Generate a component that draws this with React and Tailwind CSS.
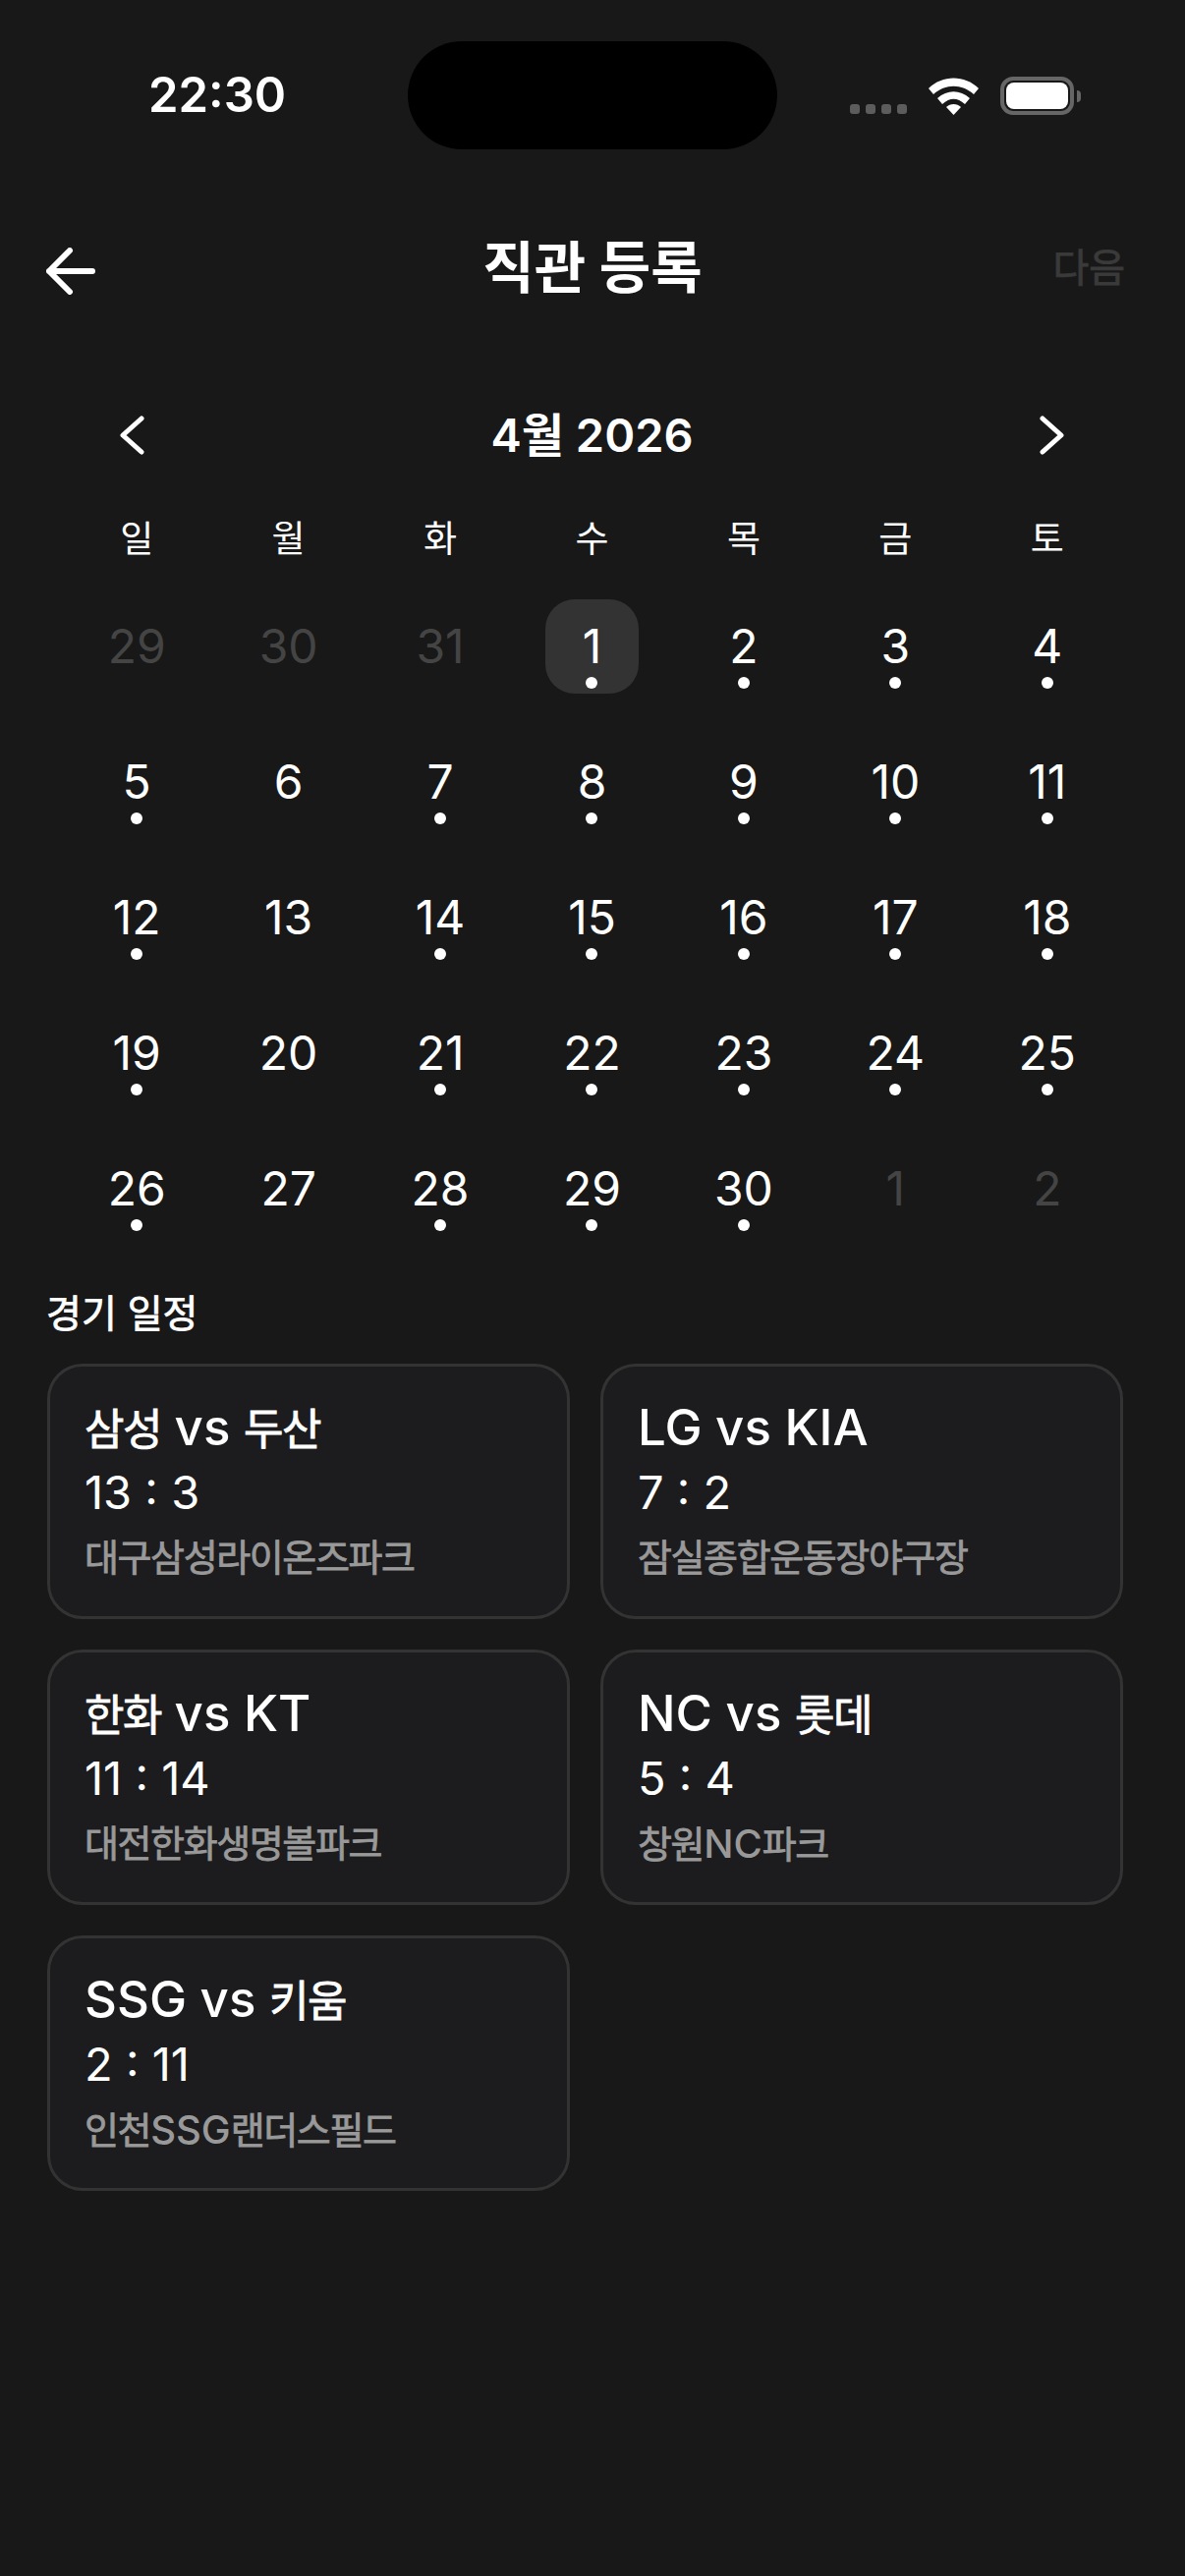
const FONT = "font-['Inter','Noto_Sans_CJK_KR',sans-serif]";

const weekdays = ["일", "월", "화", "수", "목", "금", "토"];

const days = [
  { n: 29, muted: true }, { n: 30, muted: true }, { n: 31, muted: true },
  { n: 1, dot: true, selected: true }, { n: 2, dot: true }, { n: 3, dot: true }, { n: 4, dot: true },
  { n: 5, dot: true }, { n: 6 }, { n: 7, dot: true }, { n: 8, dot: true }, { n: 9, dot: true }, { n: 10, dot: true }, { n: 11, dot: true },
  { n: 12, dot: true }, { n: 13 }, { n: 14, dot: true }, { n: 15, dot: true }, { n: 16, dot: true }, { n: 17, dot: true }, { n: 18, dot: true },
  { n: 19, dot: true }, { n: 20 }, { n: 21, dot: true }, { n: 22, dot: true }, { n: 23, dot: true }, { n: 24, dot: true }, { n: 25, dot: true },
  { n: 26, dot: true }, { n: 27 }, { n: 28, dot: true }, { n: 29, dot: true }, { n: 30, dot: true }, { n: 1, muted: true }, { n: 2, muted: true },
];

const games = [
  { title: "삼성 vs 두산", score: "13 : 3", venue: "대구삼성라이온즈파크" },
  { title: "LG vs KIA", score: "7 : 2", venue: "잠실종합운동장야구장" },
  { title: "한화 vs KT", score: "11 : 14", venue: "대전한화생명볼파크" },
  { title: "NC vs 롯데", score: "5 : 4", venue: "창원NC파크" },
  { title: "SSG vs 키움", score: "2 : 11", venue: "인천SSG랜더스필드" },
];

// hangul runs are set smaller than latin ones in the cards
function Mixed({ text, hangul, latin }) {
  return text.split(/([가-힣]+)/).filter(Boolean).map((part, i) => (
    <span key={i} className={/[가-힣]/.test(part) ? hangul : latin}>{part}</span>
  ));
}

function StatusIcons() {
  return (
    <div className="flex h-[39px] items-center">
      <div className="mr-[22px] flex gap-[6px] self-end pb-[1px]">
        {[0, 1, 2, 3].map((i) => (
          <span key={i} className="h-[10px] w-[10px] rounded-[3px] bg-[#5c5c5c]" />
        ))}
      </div>
      <svg width="51" height="38" viewBox="0 0 51 38" className="mr-[22px]">
        <path d="M0 11 C14 -3 37 -3 51 11 L46 17 C34 6 17 6 5 17 Z" fill="#fff" />
        <path d="M9 21 C19 12 32 12 42 21 L37 27 C29 20 22 20 14 27 Z" fill="#fff" />
        <path d="M18 30 C22 26 29 26 33 30 L25.5 38 Z" fill="#fff" />
      </svg>
      <div className="h-[39px] w-[75px] rounded-[13px] border-[4px] border-[#666666] p-[2px]">
        <div className="h-full w-full rounded-[8px] bg-white" />
      </div>
      <div className="ml-[3px] h-[12px] w-[4px] rounded-r-full bg-[#666666]" />
    </div>
  );
}

function DayCell({ day }) {
  return (
    <div className="flex justify-center">
      <div className={`flex h-[96px] w-[95px] flex-col items-center rounded-[30px] pt-[19px] ${day.selected ? "bg-[#333333]" : ""}`}>
        <span className={`text-[48px] leading-[58px] ${day.muted ? "text-[#444444]" : "text-white"}`}>{day.n}</span>
        {day.dot && <span className="mt-[2px] h-[12px] w-[12px] rounded-full bg-white" />}
      </div>
    </div>
  );
}

function GameCard({ game }) {
  return (
    <div className="h-[260px] rounded-[36px] border-[3px] border-[#333333] bg-[#1c1c1e] pl-[35px] pt-[29px]">
      <p className="h-[66px] leading-[66px] text-white">
        <Mixed text={game.title} hangul="text-[44px] font-normal tracking-[-1.5px] [-webkit-text-stroke:0.8px_currentColor]" latin="text-[51px] font-medium" />
      </p>
      <p className="h-[66px] text-[47px] leading-[66px] text-white">{game.score}</p>
      <p className="h-[67px] leading-[67px] text-[#999999]">
        <Mixed text={game.venue} hangul="text-[38px] font-normal tracking-[-1.4px] [-webkit-text-stroke:0.8px_currentColor]" latin="text-[40px] font-medium" />
      </p>
    </div>
  );
}

export default function App() {
  return (
    <div className={`h-[2622px] w-[1206px] overflow-hidden bg-[#181818] text-white ${FONT}`}>
      <div className="relative flex h-[152px] justify-between pl-[151px] pr-[106px] pt-[70px]">
        <span className="text-[49px] leading-[54px] font-semibold">22:30</span>
        <div className="pt-[8px]">
          <StatusIcons />
        </div>
        <div className="absolute left-[415px] top-[42px] h-[110px] w-[376px] rounded-[55px] bg-black" />
      </div>

      <div className="mt-[73px] grid h-[90px] grid-cols-[1fr_auto_1fr] items-center px-[46px]">
        <svg width="50" height="48" viewBox="0 0 50 48" fill="none" stroke="#fff" strokeWidth="6" strokeLinecap="round" strokeLinejoin="round" className="ml-[1px] mt-[12px]">
          <path d="M3 24 H47 M24 3 L3 24 L24 45" />
        </svg>
        <h1 className="mt-[5px] text-[57px] leading-[70px] font-bold">직관 등록</h1>
        <span className="mt-[6px] justify-self-end pr-[15px] text-[40px] font-normal text-[#3a3a3a] [-webkit-text-stroke:0.8px_currentColor]">다음</span>
      </div>

      <div className="mt-[103px] flex h-[50px] items-center justify-between pl-[122px] pr-[123px]">
        <svg width="25" height="40" viewBox="0 0 25 40" fill="none" stroke="#fff" strokeWidth="5" strokeLinecap="round" strokeLinejoin="round">
          <path d="M22 3 L3 20 L22 37" />
        </svg>
        <span className="text-[47px] leading-[50px] font-semibold">4월 2026</span>
        <svg width="25" height="40" viewBox="0 0 25 40" fill="none" stroke="#fff" strokeWidth="5" strokeLinecap="round" strokeLinejoin="round">
          <path d="M3 3 L22 20 L3 37" />
        </svg>
      </div>

      <div className="mt-[57px] grid grid-cols-7 pl-[62px] pr-[63px]">
        {weekdays.map((d) => (
          <span key={d} className="text-center text-[37px] leading-[48px]">{d}</span>
        ))}
      </div>

      <div className="mt-[37px] grid grid-cols-7 gap-y-[42px] pl-[62px] pr-[63px]">
        {days.map((day, i) => (
          <DayCell key={i} day={day} />
        ))}
      </div>

      <h2 className="mt-[54px] pl-[47px] text-[39px] leading-[50px] font-normal [-webkit-text-stroke:0.8px_currentColor]">경기 일정</h2>

      <div className="mt-[26px] grid grid-cols-2 gap-x-[31px] gap-y-[31px] pl-[48px] pr-[63px]">
        {games.map((game) => (
          <GameCard key={game.title} game={game} />
        ))}
      </div>
    </div>
  );
}
